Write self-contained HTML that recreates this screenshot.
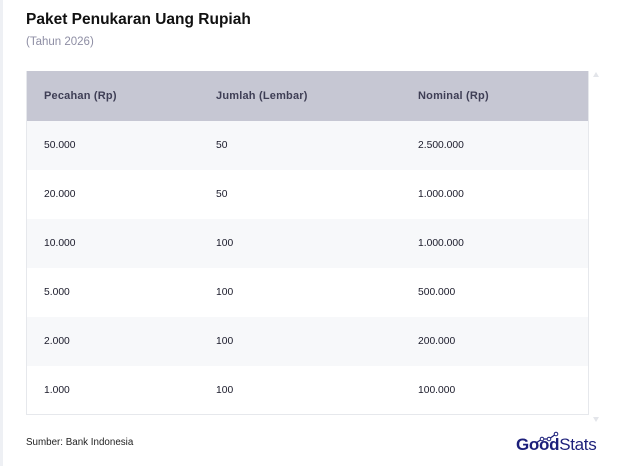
<!DOCTYPE html>
<html><head><meta charset="utf-8"><style>
*{margin:0;padding:0;box-sizing:border-box}
body{width:623px;height:466px;background:#fff;font-family:"Liberation Sans",sans-serif;position:relative;overflow:hidden;color:#1a1a2a}
.lb{position:absolute;left:0;top:0;width:3px;height:466px;background:#eef0f4}
h1{position:absolute;left:26px;top:11px;font-size:15.5px;font-weight:bold;color:#111}
.sub{position:absolute;left:26px;top:36px;font-size:11.5px;color:#8e8ea4}
.tbl{position:absolute;left:26px;top:71px;width:563px;height:344px;border:1px solid #e6e8ec;border-top:none}
.row{height:49px;display:flex;align-items:center;font-size:10.3px;position:relative}
.hd{height:50px;background:#c6c7d3;color:#3e3e55;font-weight:bold;font-size:11px;letter-spacing:0.2px}
.alt{background:#f7f8fa}
.c1{position:absolute;left:17px}.c2{position:absolute;left:189px}.c3{position:absolute;left:391px}
.src{position:absolute;left:26px;top:437px;font-size:9.8px;color:#222}
.logo{position:absolute;left:516px;top:435px;font-size:17px;color:#1c1f7a;letter-spacing:-0.3px}
.logo b{font-weight:900}
.arr{position:absolute;left:593px;width:0;height:0;border-left:3px solid transparent;border-right:3px solid transparent}
</style></head><body>
<div class="lb"></div>
<h1>Paket Penukaran Uang Rupiah</h1>
<div class="sub">(Tahun 2026)</div>
<div class="arr" style="top:72px;border-bottom:5px solid #e3e5ea"></div>
<div class="arr" style="top:417px;border-top:5px solid #e3e5ea"></div>
<div class="tbl">
<div class="row hd"><span class="c1">Pecahan (Rp)</span><span class="c2">Jumlah (Lembar)</span><span class="c3">Nominal (Rp)</span></div>
<div class="row alt"><span class="c1">50.000</span><span class="c2">50</span><span class="c3">2.500.000</span></div>
<div class="row"><span class="c1">20.000</span><span class="c2">50</span><span class="c3">1.000.000</span></div>
<div class="row alt"><span class="c1">10.000</span><span class="c2">100</span><span class="c3">1.000.000</span></div>
<div class="row"><span class="c1">5.000</span><span class="c2">100</span><span class="c3">500.000</span></div>
<div class="row alt"><span class="c1">2.000</span><span class="c2">100</span><span class="c3">200.000</span></div>
<div class="row"><span class="c1">1.000</span><span class="c2">100</span><span class="c3">100.000</span></div>
</div>
<div class="src">Sumber: Bank Indonesia</div>
<svg style="position:absolute;left:534px;top:431px" width="28" height="14"><polyline points="2,12 8,8 15,8 22,3" fill="none" stroke="#1c1f7a" stroke-width="1.3"/><circle cx="8" cy="8" r="1.8" fill="#fff" stroke="#1c1f7a"/><circle cx="15" cy="8" r="1.8" fill="#fff" stroke="#1c1f7a"/><circle cx="22" cy="3" r="1.8" fill="#fff" stroke="#1c1f7a"/></svg>
<div class="logo"><b>Good</b>Stats</div>
</body></html>
